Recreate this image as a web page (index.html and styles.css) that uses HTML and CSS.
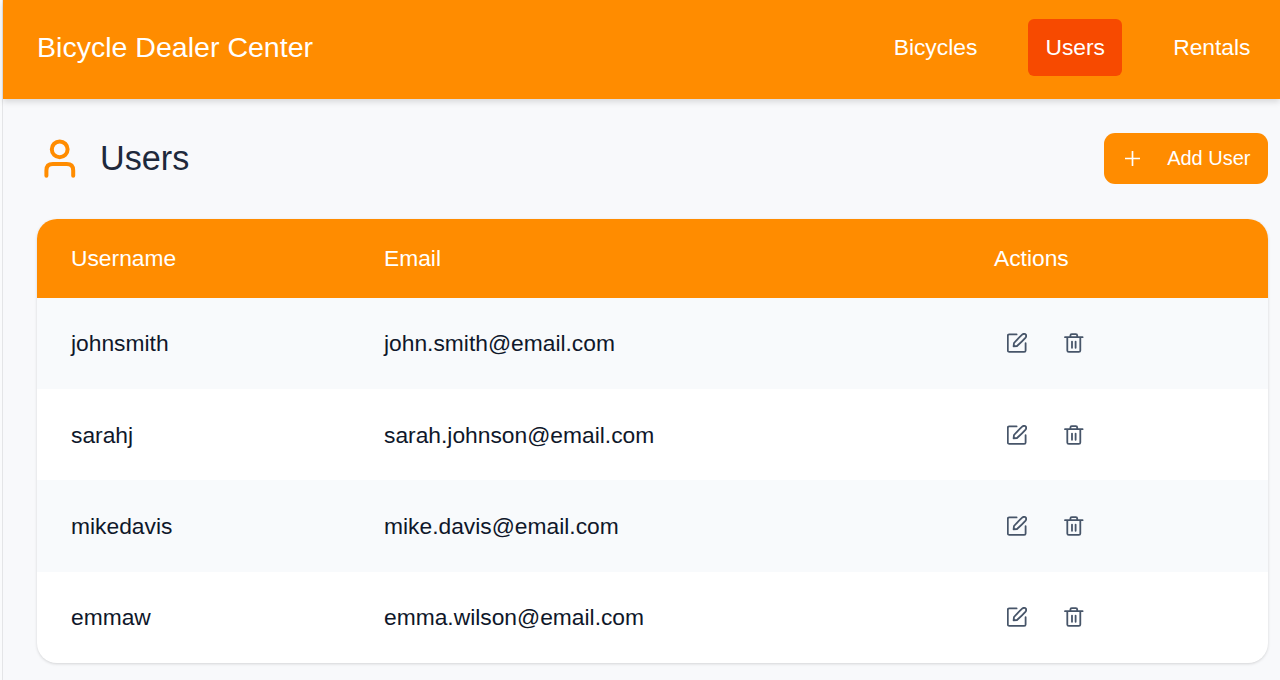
FILE: index.html
```html
<!DOCTYPE html>
<html lang="en">
<head>
<meta charset="utf-8">
<title>Bicycle Dealer Center</title>
<link rel="stylesheet" href="styles.css">
</head>
<body>
<svg class="sprite" aria-hidden="true">
  <symbol id="edit" viewBox="0 0 20 20">
    <path d="M9.6 1.4H2.2Q.8 1.4.8 2.8V17.4Q.8 18.8 2.2 18.8H17.2Q18.6 18.8 18.6 17.4V10.2"/>
    <path d="M6.6 13.4L7 10Q11.5 5 15.4 1.4Q17.2.2 18.6 1.4Q19.8 2.8 18.6 4.6Q15 8.6 10 13Z"/>
  </symbol>
  <symbol id="trash" viewBox="0 0 20 20">
    <path d="M1 4.2H18.6M6.4 4.2V2.5Q6.4 1.1 7.8 1.1H11.8Q13.2 1.1 13.2 2.5V4.2M3.3 4.2V17.4Q3.3 18.9 4.8 18.9H14.8Q16.3 18.9 16.3 17.4V4.2M8 8.6V14.8M11.6 8.6V14.8"/>
  </symbol>
</svg>
<div class="page">
  <header class="topbar">
    <div class="brand">Bicycle Dealer Center</div>
    <nav class="nav">
      <a class="link">Bicycles</a>
      <a class="link active">Users</a>
      <a class="link">Rentals</a>
    </nav>
  </header>
  <main class="content">
    <div class="heading">
      <svg class="user" viewBox="0 0 46 46"><circle cx="22.7" cy="13.3" r="7.9"/><path d="M9.4 39.7V34.5Q9.4 28.1 15.8 28.1H29.8Q36.2 28.1 36.2 34.5V39.7"/></svg>
      <h1 class="title">Users</h1>
      <button class="add"><svg class="plus" viewBox="0 0 16 16"><path d="M8 .5V15.5M.5 8H15.5"/></svg><span>Add User</span></button>
    </div>
    <section class="table">
      <div class="row head"><div>Username</div><div>Email</div><div>Actions</div></div>
      <div class="row"><div>johnsmith</div><div>john.smith@email.com</div><div class="actions"><svg><use href="#edit"/></svg><svg><use href="#trash"/></svg></div></div>
      <div class="row"><div>sarahj</div><div>sarah.johnson@email.com</div><div class="actions"><svg><use href="#edit"/></svg><svg><use href="#trash"/></svg></div></div>
      <div class="row"><div>mikedavis</div><div>mike.davis@email.com</div><div class="actions"><svg><use href="#edit"/></svg><svg><use href="#trash"/></svg></div></div>
      <div class="row"><div>emmaw</div><div>emma.wilson@email.com</div><div class="actions"><svg><use href="#edit"/></svg><svg><use href="#trash"/></svg></div></div>
    </section>
  </main>
</div>
</body>
</html>
```
FILE: styles.css
```css
* { box-sizing: border-box; }
body { margin: 0; height: 680px; overflow: hidden; background: #fafbfc; font: 22.8px/34px "Liberation Sans", Arial, sans-serif; color: #0f172a; }
.sprite { display: none; }
.page { margin-left: 2px; height: 680px; border-left: 1px solid #e4e5e7; background: #f8f9fb; }
.topbar { height: 98.5px; padding: 0 12.5px 4px 34px; display: flex; align-items: center; justify-content: space-between; background: #ff8c00; color: #fff; box-shadow: 0 3px 6px rgba(0, 0, 0, .13); }
.brand { font-size: 28.55px; }
.nav { display: flex; gap: 34.2px; }
.link { height: 57px; padding: 0 17px; border-radius: 6px; line-height: 57px; }
.active { background: #f74a00; }
.content { padding: 34.5px 12.5px 0 34px; }
.heading { height: 51px; margin-bottom: 34.5px; display: flex; align-items: center; }
.user { width: 46px; height: 46px; fill: none; stroke: #ff8c00; stroke-width: 4; stroke-linecap: round; }
.title { margin: 0 0 2px 17px; font-size: 34.2px; font-weight: 400; color: #1e293b; }
.add { width: 163.5px; height: 51px; margin-left: auto; padding: 0 17px 0 21px; border: 0; border-radius: 11px; display: flex; align-items: center; justify-content: space-between; background: #ff8c00; color: #fff; font: 20px "Liberation Sans", Arial, sans-serif; }
.plus { width: 15px; height: 15px; fill: none; stroke: #fff; stroke-width: 1.8; stroke-linecap: round; }
.table { border-radius: 20px; overflow: hidden; background: #fff; box-shadow: 0 1px 3px rgba(0, 0, 0, .15); }
.row { height: 91.2px; padding: 0 34px .4px; display: grid; grid-template-columns: 313px 610px 1fr; align-items: center; }
.row:nth-child(even) { background: #f8fafc; }
.head { height: 79.5px; padding-bottom: 0; background: #ff8c00; color: #fff; }
.actions { padding: 0 0 0 13px; display: flex; gap: 37px; }
.actions svg { width: 20px; height: 20px; overflow: visible; fill: none; stroke: #475569; stroke-width: 1.8; stroke-linecap: round; stroke-linejoin: round; }
```
